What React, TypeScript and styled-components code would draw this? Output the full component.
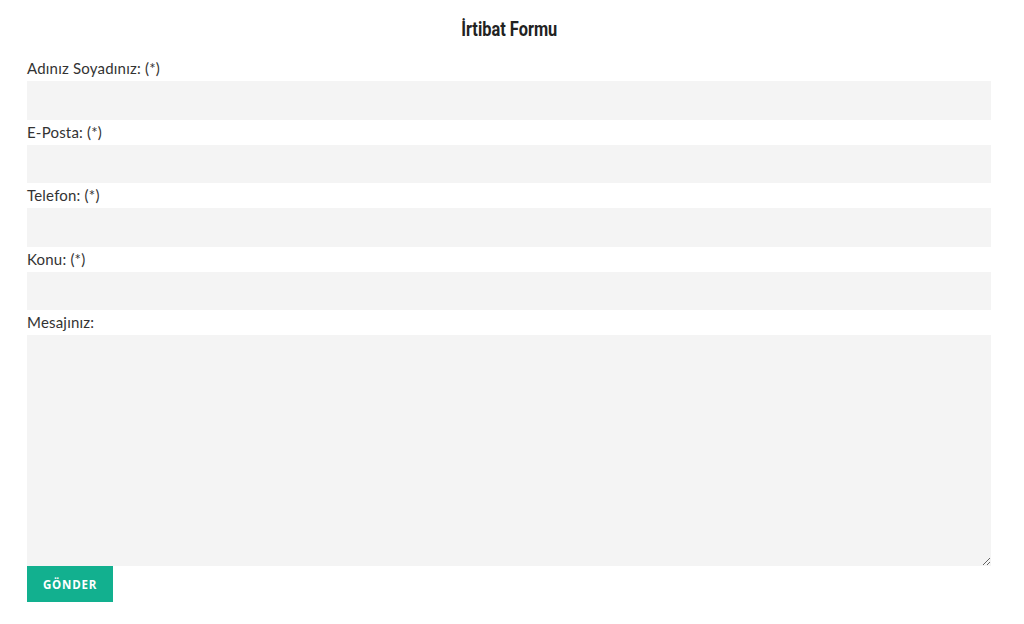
import React from "react";
import styled, { createGlobalStyle } from "styled-components";

const Global = createGlobalStyle`
  html, body { margin: 0; padding: 0; background: #fff; }
  body { font-family: "Lato", "Open Sans", sans-serif; color: #333; }
  * { box-sizing: border-box; }
`;

const Wrapper = styled.div`
  padding: 20px 33px 0 27px;
  display: flex;
  flex-direction: column;
`;

const Title = styled.h2`
  margin: 0 0 16px;
  text-align: center;
  font-family: "Roboto", "Noto Sans", sans-serif;
  font-weight: 700;
  font-size: 19.5px;
  line-height: 20px;
  color: #222;
`;

const TitleText = styled.span`
  display: inline-block;
  transform: scaleX(0.84);
  transform-origin: center;
`;

const Form = styled.form`
  display: flex;
  flex-direction: column;
`;

const Label = styled.label`
  font-size: 15px;
  line-height: 25px;
  color: #333;
  letter-spacing: 0.2px;
`;

const Input = styled.input`
  display: block;
  width: 100%;
  height: 38.5px;
  border: none;
  background: #f4f4f4;
  margin: 0;
  padding: 0 10px;
  outline: none;
`;

const TextArea = styled.textarea`
  display: block;
  width: 100%;
  height: 231px;
  border: none;
  background: #f4f4f4;
  margin: 0;
  padding: 10px;
  outline: none;
  resize: vertical;
`;

const Button = styled.button`
  align-self: flex-start;
  width: 86px;
  height: 36px;
  border: none;
  background: #12b08f;
  color: #fff;
  font-family: "Open Sans", sans-serif;
  font-weight: 700;
  font-size: 11.5px;
  letter-spacing: 0.8px;
  cursor: pointer;
  padding: 0;
`;

const fields = ["Adınız Soyadınız: (*)", "E-Posta: (*)", "Telefon: (*)", "Konu: (*)"];

export default function App() {
  return (
    <>
      <Global />
      <Wrapper>
        <Title>
          <TitleText>İrtibat Formu</TitleText>
        </Title>
        <Form onSubmit={(e) => e.preventDefault()}>
          {fields.map((f) => (
            <React.Fragment key={f}>
              <Label>{f}</Label>
              <Input type="text" />
            </React.Fragment>
          ))}
          <Label>Mesajınız:</Label>
          <TextArea />
          <Button type="submit">GÖNDER</Button>
        </Form>
      </Wrapper>
    </>
  );
}
